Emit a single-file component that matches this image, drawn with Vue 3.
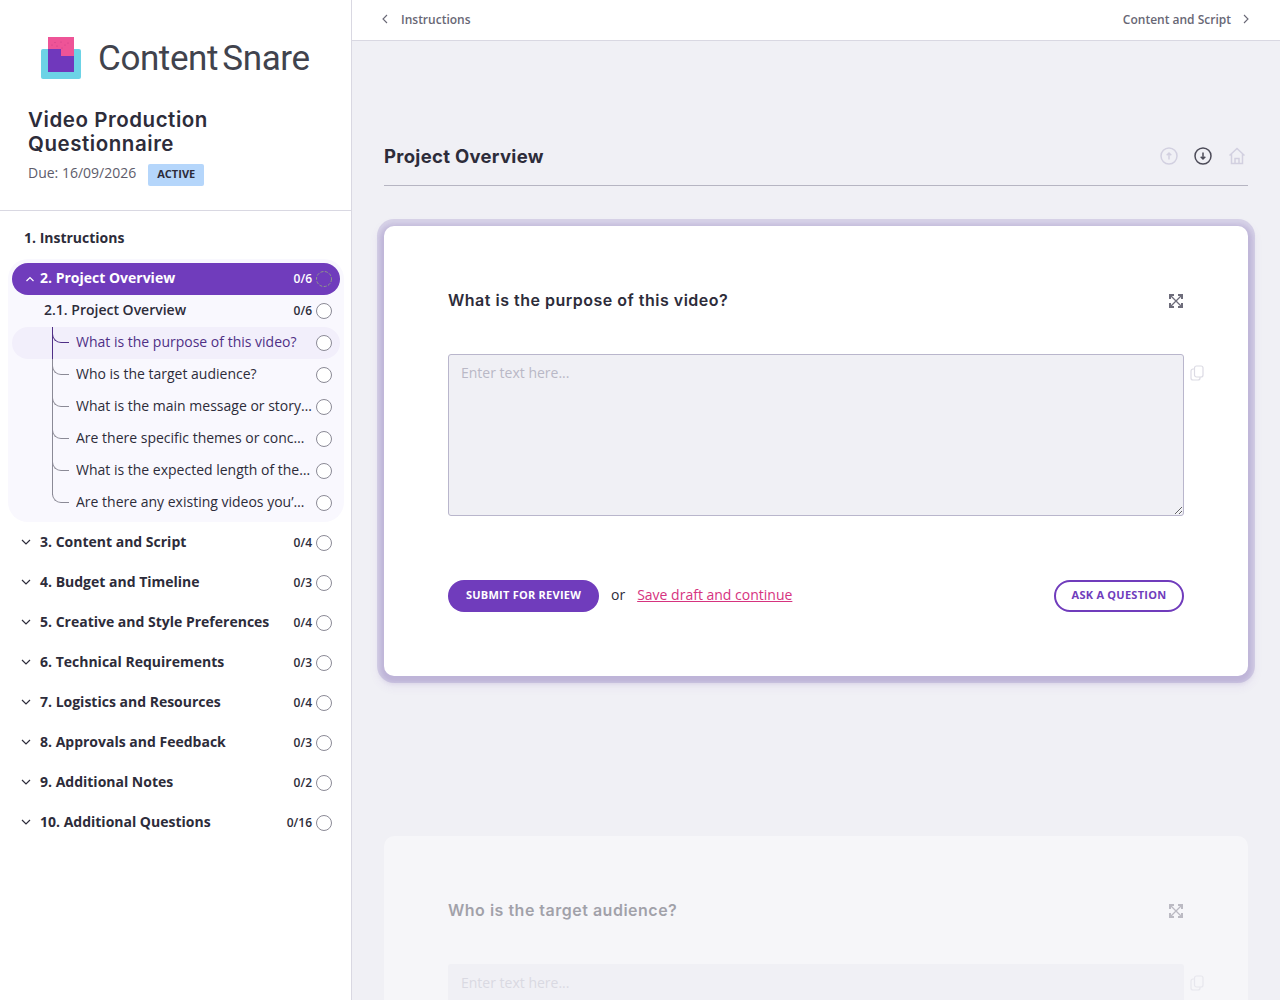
<script setup>
const items = [
  { text: 'What is the purpose of this video?', active: true },
  { text: 'Who is the target audience?' },
  { text: 'What is the main message or story you want to convey?' },
  { text: 'Are there specific themes or concepts to include?' },
  { text: 'What is the expected length of the final video?' },
  { text: 'Are there any existing videos you’d like to reference?' }
]

const sections = [
  { title: '3. Content and Script', count: '0/4' },
  { title: '4. Budget and Timeline', count: '0/3' },
  { title: '5. Creative and Style Preferences', count: '0/4' },
  { title: '6. Technical Requirements', count: '0/3' },
  { title: '7. Logistics and Resources', count: '0/4' },
  { title: '8. Approvals and Feedback', count: '0/3' },
  { title: '9. Additional Notes', count: '0/2' },
  { title: '10. Additional Questions', count: '0/16' }
]
</script>

<template>
  <div class="page">
    <aside class="sidebar">
      <div class="brand">
        <svg class="logo" width="42" height="44" viewBox="40 36 42 44">
          <rect x="41" y="49" width="40" height="30" rx="2" fill="#6cd3e6" />
          <rect x="48" y="37" width="26" height="24" fill="#ee5497" />
          <path d="M48 49h13v7h13v16H48z" fill="#7038bc" />
          <g fill="#c23a86">
            <circle cx="55" cy="42.500" r=".5" />
            <circle cx="61" cy="42" r=".5" />
            <circle cx="68" cy="43" r=".5" />
            <circle cx="52" cy="45" r=".5" />
            <circle cx="57" cy="46" r=".5" />
            <circle cx="65" cy="45" r=".5" />
            <circle cx="62" cy="48" r=".5" />
          </g>
        </svg>
        <span class="brand-name">Content Snare</span>
      </div>
      <div class="intro">
        <h1>Video Production Questionnaire</h1>
        <div class="due">
          <span class="due-date">Due: 16/09/2026</span>
          <span class="badge">ACTIVE</span>
        </div>
      </div>

      <nav class="nav">
        <div class="plain-row">1. Instructions</div>

        <div class="group">
          <div class="pill">
            <svg class="chev" width="10" height="6" viewBox="0 0 10 6"><path d="M1.500 5 5 1.500 8.500 5" /></svg>
            <span class="row-title">2. Project Overview</span>
            <span class="count raised">0/6</span>
            <svg class="check" width="16" height="16" viewBox="0 0 16 16"><circle cx="8" cy="8" r="7.500" fill="none" stroke="#8f9a86" stroke-dasharray="3 1.500" /></svg>
          </div>
          <div class="sub">
            <span class="sub-title">2.1. Project Overview</span>
            <span class="count raised">0/6</span>
            <span class="circle"></span>
          </div>
          <div class="tree">
            <div v-for="item in items" :key="item.text" class="item" :class="{ current: item.active }">
              <span class="item-text">{{ item.text }}</span>
              <span class="circle"></span>
            </div>
          </div>
        </div>

        <div v-for="s in sections" :key="s.title" class="section">
          <svg class="chev" width="10" height="6" viewBox="0 0 10 6"><path d="M1 1l4 4 4-4" /></svg>
          <span class="row-title">{{ s.title }}</span>
          <span class="count">{{ s.count }}</span>
          <span class="circle"></span>
        </div>
      </nav>
    </aside>

    <div class="content">
      <header class="topbar">
        <a class="crumb">
          <svg width="6" height="10" viewBox="0 0 6 10"><path d="M5 1 1 5l4 4" /></svg>
          Instructions
        </a>
        <a class="crumb next">
          Content and Script
          <svg width="6" height="10" viewBox="0 0 6 10"><path d="M1 1l4 4-4 4" /></svg>
        </a>
      </header>

      <main class="main">
        <div class="heading">
          <h2>Project Overview</h2>
          <div class="heading-icons">
            <svg class="faded" width="18" height="18" viewBox="0 0 18 18">
              <circle cx="9" cy="9" r="8" />
              <path d="M9 12.500V6M6.700 8.200 9 6l2.300 2.200" />
            </svg>
            <svg class="dark" width="18" height="18" viewBox="0 0 18 18">
              <circle cx="9" cy="9" r="8" />
              <path d="M9 5.500V12M6.700 9.800 9 12l2.300-2.200" />
            </svg>
            <svg class="faded" width="18" height="18" viewBox="0 0 18 18">
              <path d="M1.500 8.500 9 1.500l7.500 7M3.500 7v9.500h11V7M7 16.500V11.500h4v5" />
            </svg>
          </div>
        </div>

        <section class="card focused">
          <div class="question">
            <h3>What is the purpose of this video?</h3>
            <svg class="expand" width="14" height="14" viewBox="0 0 14 14">
              <path d="M2 2l10 10M12 2 2 12" />
              <path class="corners" d="M1 5V1h4M13 5V1H9M1 9v4h4M13 9v4H9" />
            </svg>
          </div>
          <div class="field">
            <textarea class="answer" placeholder="Enter text here..."></textarea>
            <svg class="copy" width="14" height="16" viewBox="0 0 14 16">
              <rect x="4.500" y="1" width="8.500" height="11" rx="2" />
              <path d="M4.500 4H3a2 2 0 0 0-2 2v7a2 2 0 0 0 2 2h5a2 2 0 0 0 2-2v-1" />
            </svg>
          </div>
          <div class="actions">
            <button class="submit">SUBMIT FOR REVIEW</button>
            <span class="or">or</span>
            <a class="draft">Save draft and continue</a>
            <button class="ask">ASK A QUESTION</button>
          </div>
        </section>

        <section class="card upcoming">
          <div class="question">
            <h3>Who is the target audience?</h3>
            <svg class="expand" width="14" height="14" viewBox="0 0 14 14">
              <path d="M2 2l10 10M12 2 2 12" />
              <path class="corners" d="M1 5V1h4M13 5V1H9M1 9v4h4M13 9v4H9" />
            </svg>
          </div>
          <div class="field">
            <textarea class="answer" placeholder="Enter text here..."></textarea>
            <svg class="copy" width="14" height="16" viewBox="0 0 14 16">
              <rect x="4.500" y="1" width="8.500" height="11" rx="2" />
              <path d="M4.500 4H3a2 2 0 0 0-2 2v7a2 2 0 0 0 2 2h5a2 2 0 0 0 2-2v-1" />
            </svg>
          </div>
        </section>
      </main>
    </div>
  </div>
</template>

<style>
html,
body {
  margin: 0;
  height: 1000px;
  overflow: hidden;
}
</style>

<style scoped>
.page {
  display: flex;
  height: 1000px;
  overflow: hidden;
  font-family: "Open Sans", sans-serif;
  font-size: 14px;
  color: #2d2c3a;
  background: #f0f0f5;
}

.sidebar {
  width: 351px;
  flex: none;
  background: #fff;
  border-right: 1px solid #d9d8e2;
}

.brand {
  display: flex;
  align-items: center;
  height: 44px;
  padding: 36px 0 0 40px;
}

.brand-name {
  margin-left: 16px;
  margin-top: 1px;
  font-family: Roboto, sans-serif;
  font-size: 35px;
  font-weight: 400;
  letter-spacing: -.4px;
  word-spacing: -4px;
  white-space: nowrap;
  color: #41434d;
}

.intro {
  box-sizing: border-box;
  height: 131px;
  padding: 28px 100px 0 28px;
  border-bottom: 1px solid #d9d8e2;
}

h1 {
  margin: 0;
  font-family: Inter, sans-serif;
  font-size: 20.5px;
  font-weight: 600;
  letter-spacing: .55px;
  line-height: 24px;
}

.due {
  display: flex;
  align-items: center;
  gap: 12px;
  margin-top: 7px;
  color: #5d5c6b;
}

.due-date {
  margin-bottom: 5px;
}

.badge {
  width: 56px;
  height: 22px;
  line-height: 20px;
  text-align: center;
  border-radius: 2px;
  background: #b5d6fb;
  color: #2d2c3a;
  font-size: 11px;
  font-weight: 700;
}

.nav {
  padding-top: 7px;
}

.plain-row {
  height: 40px;
  line-height: 40px;
  padding-left: 24px;
  font-weight: 700;
}

.group {
  margin: 1px 7px 0 8px;
  padding: 4px 4px 3px;
  border-radius: 20px;
  background: #f9f8fe;
}

.pill,
.sub,
.item,
.section {
  display: flex;
  align-items: center;
  height: 32px;
}

.pill {
  padding: 0 8px 0 13px;
  border-radius: 16px;
  background: #703cbc;
  color: #fff;
}

.chev {
  flex: none;
  margin-right: 5px;
  fill: none;
  stroke: currentColor;
  stroke-width: 1.200;
}

.row-title {
  flex: 1;
  font-weight: 700;
}

.pill .row-title {
  margin-bottom: 4px;
}

.section .row-title {
  margin-bottom: 2px;
}

.count {
  margin-right: 4px;
  font-size: 12px;
  font-weight: 600;
}

.count.raised {
  margin-bottom: 2px;
}

.check,
.circle {
  flex: none;
  width: 16px;
  height: 16px;
}

.circle {
  box-sizing: border-box;
  border: 1px solid #8b8a96;
  border-radius: 50%;
  background: #fff;
}

.section .circle {
  margin-top: 2px;
}

.sub {
  padding: 0 8px 0 32px;
}

.sub-title {
  flex: 1;
  font-weight: 600;
  margin-bottom: 4px;
}

.item {
  position: relative;
  padding: 0 8px 0 64px;
  border-radius: 16px;
}

.item::before {
  content: "";
  position: absolute;
  left: 40px;
  top: 0;
  bottom: 0;
  border-left: 1px solid #8b8a96;
}

.item::after {
  content: "";
  position: absolute;
  left: 40px;
  top: 5px;
  width: 16px;
  height: 10px;
  border-left: 1px solid #8b8a96;
  border-bottom: 1px solid #8b8a96;
  border-bottom-left-radius: 9px;
}

.item:last-child::before {
  bottom: 24px;
}

.item.current {
  background: #f2effb;
  color: #4f2f86;
}

.item.current::before,
.item.current::after {
  border-color: #4f2f86;
}

.item-text {
  flex: 1;
  min-width: 0;
  white-space: nowrap;
  overflow: hidden;
  text-overflow: ellipsis;
  margin-right: 4px;
  margin-bottom: 4px;
}

.section {
  height: 40px;
  padding: 0 19px 0 21px;
}

.section .chev {
  margin-right: 9px;
}

.content {
  flex: 1;
  min-width: 0;
}

.topbar {
  display: flex;
  align-items: center;
  justify-content: space-between;
  box-sizing: border-box;
  height: 41px;
  padding: 0 31px 2px 30px;
  background: #fff;
  border-bottom: 1px solid #d9d8e2;
}

.crumb {
  display: flex;
  align-items: center;
  gap: 13px;
  font-size: 12px;
  font-weight: 600;
  color: #686775;
}

.crumb.next {
  gap: 12px;
}

.crumb svg {
  fill: none;
  stroke: #686775;
  stroke-width: 1.100;
}

.main {
  padding: 0 32px;
}

.heading {
  display: flex;
  align-items: center;
  justify-content: space-between;
  height: 145px;
  box-sizing: border-box;
  padding-top: 86px;
  border-bottom: 1px solid #b6b5c2;
}

h2 {
  margin: 0;
  font-family: Inter, sans-serif;
  font-size: 18.5px;
  font-weight: 700;
  letter-spacing: .3px;
}

.heading-icons {
  display: flex;
  gap: 16px;
  margin-right: 2px;
}

.heading-icons svg {
  fill: none;
  stroke-width: 1.500;
}

.faded {
  stroke: #d2d0e0;
}

.dark {
  stroke: #4c4b58;
}

.card {
  box-sizing: border-box;
  border-radius: 10px;
  padding: 64px;
}

.focused {
  height: 450px;
  margin-top: 40px;
  background: #fff;
  box-shadow:
    0 0 0 7px rgba(90, 60, 160, .16),
    0 3px 5px 4px rgba(80, 50, 140, .14),
    0 5px 10px 7px rgba(112, 60, 188, .06);
}

.upcoming {
  margin-top: 160px;
  height: 400px;
  background: #fff;
  opacity: .4;
}

.upcoming .answer {
  border-color: transparent;
}

.question {
  display: flex;
  align-items: center;
  justify-content: space-between;
  height: 20px;
}

h3 {
  margin: 0;
  font-family: Inter, sans-serif;
  font-size: 16px;
  font-weight: 600;
  letter-spacing: .5px;
}

.expand {
  margin-right: 1px;
  margin-top: 1px;
  fill: none;
  stroke: #6d6c7a;
  stroke-width: 1.300;
}

.expand .corners {
  stroke-width: 2;
}

.field {
  position: relative;
  margin-top: 44px;
}

.answer {
  display: block;
  box-sizing: border-box;
  width: 100%;
  height: 162px;
  padding: 8px 12px;
  border: 1px solid #b9b6cc;
  border-radius: 3px;
  outline: none;
  background: #f0f0f5;
  font-family: "Open Sans", sans-serif;
  font-size: 14px;
  line-height: 20px;
  color: #2d2c3a;
}

.answer::placeholder {
  color: #b9b8c6;
  opacity: 1;
}

.copy {
  position: absolute;
  left: 742px;
  top: 11px;
  fill: none;
  stroke: #dcdbe4;
  stroke-width: 1.200;
}

.actions {
  display: flex;
  align-items: center;
  margin-top: 64px;
}

button {
  height: 32px;
  padding: 0 0 4px;
  border-radius: 16px;
  font-family: "Open Sans", sans-serif;
  font-size: 11px;
  font-weight: 700;
  letter-spacing: .25px;
}

.submit {
  width: 151px;
  border: 0;
  background: #703cbc;
  color: #fff;
}

.or {
  margin-left: 12px;
  margin-bottom: 3px;
}

.draft {
  margin-left: 12px;
  margin-bottom: 3px;
  color: #d6337f;
  text-decoration: underline;
}

.ask {
  width: 130px;
  margin-left: auto;
  border: 2px solid #703cbc;
  background: #fff;
  color: #703cbc;
}
</style>
